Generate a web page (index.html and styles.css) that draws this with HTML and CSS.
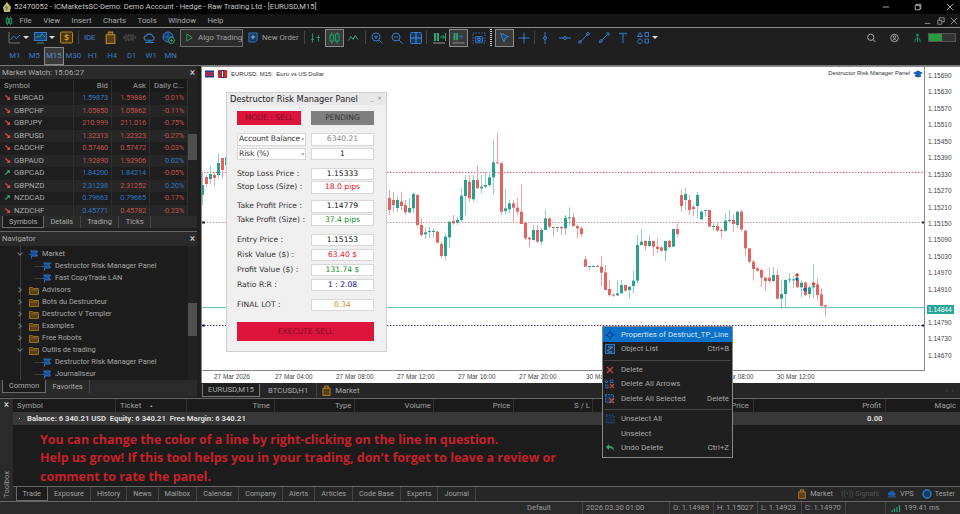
FILE: index.html
```html
<!DOCTYPE html>
<html lang="en">
<head>
<meta charset="utf-8">
<title>MetaTrader</title>
<link rel="stylesheet" href="styles.css">
</head>
<body>
<svg class="defs" aria-hidden="true">
  <symbol id="folder" viewBox="0 0 10 9"><path d="M.5 1.5h3l1 1h5v6H.5z" fill="#5a4012" stroke="#a87c25" stroke-width=".8"/><path d="M2 4h6" stroke="#a87c25" stroke-width=".6"/></symbol>
  <symbol id="robot" viewBox="0 0 10 9"><path d="M1.5 1h7L7 3.5l1.5 2.5h-6v2.500" fill="#1a4f9c" stroke="#3479c8" stroke-width=".9"/><path d="M0 4.500h2" stroke="#3479c8" stroke-width=".8"/></symbol>
  <symbol id="bag" viewBox="0 0 10 12"><path d="M1 3.500h8v8H1zM3 3.500V1h4v2.500" fill="#5a4012" stroke="#b5862c"/></symbol>
  <symbol id="cloud" viewBox="0 0 12 10"><path d="M3 7.500a2 2 0 0 1 0-4 3.200 3.200 0 0 1 6 .5 1.800 1.800 0 0 1 0 3.500zM6 7.500V10M2 9.500h8" fill="none" stroke="#3479c8"/></symbol>
</svg>
<div class="app">

  <header class="title">
    <svg class="t-logo" viewBox="0 0 10 11"><path d="M5 0l4 5-1 5H2L1 5z" fill="#c7b26a"/><path d="M3 4l3 1-1 4z" fill="#3f8f5f"/></svg>
    <span class="t-text">52470052 - ICMarketsSC-Demo: Demo Account - Hedge - Raw Trading Ltd - [EURUSD,M15]</span>
    <span class="win win-a">
      <svg viewBox="0 0 10 10"><path d="M1 5h8" stroke="#ccc"/></svg>
      <svg viewBox="0 0 10 10"><path d="M1.500 3h6v5.500h-6zM3 3V1.500h5.500V7H7.500" fill="none" stroke="#ccc"/></svg>
      <svg viewBox="0 0 10 10"><path d="M1 1l8 8M9 1l-8 8" stroke="#ccc"/></svg>
    </span>
  </header>

  <nav class="menu">
    <svg class="m-ic" viewBox="0 0 10 11"><path d="M3 0v11M7 0v11" stroke="#2f9d68"/><path d="M1.500 2.500h3v6h-3zM5.500 2.500h3v6h-3z" fill="#16412c" stroke="#2f9d68"/></svg>
    <span>File</span><span>View</span><span>Insert</span><span>Charts</span><span>Tools</span><span>Window</span><span>Help</span>
    <span class="win win-b">
      <svg viewBox="0 0 10 10"><path d="M1 8h7" stroke="#aaa"/></svg>
      <svg viewBox="0 0 10 10"><path d="M1 4h5v5H1zM3 4V1h6v5H6" fill="none" stroke="#aaa"/></svg>
      <svg viewBox="0 0 10 10"><path d="M1 1l8 8M9 1l-8 8" stroke="#aaa"/></svg>
    </span>
  </nav>

  <div class="tb1">
    <div class="tg tg-a">
      <svg class="ti" viewBox="0 0 13 13"><path d="M1 1v11h11" fill="none" stroke="#777"/><path d="M2.500 9l3-4 3 2.500L12 4" fill="none" stroke="#3479c8"/></svg><i class="drop"></i>
      <svg class="ti ti-next" viewBox="0 0 13 13"><rect x=".5" y="1.500" width="12" height="8" fill="#16457a" stroke="#3479c8"/><path d="M2 7l2-2 2 1 2-3 3 3M3 12h7" fill="none" stroke="#2f9d68"/></svg><i class="drop"></i>
      <svg class="ti ti-next" viewBox="0 0 13 13"><rect x=".5" y="1" width="12" height="11" rx="1" fill="#4a3510" stroke="#b5862c"/><text x="6.500" y="10" class="dollar">$</text></svg>
      <i class="sep"></i>
    </div>
    <div class="tg tg-b">
      <span class="ide">IDE</span>
      <svg class="ti" viewBox="0 0 10 12"><use href="#bag"/></svg>
      <svg class="ti" viewBox="0 0 13 13"><path d="M5 4h3v5H5zM3 3v7M10 3v7M1 5v3M12 5v3" fill="none" stroke="#555"/></svg>
      <svg class="ti" viewBox="0 0 12 10"><use href="#cloud"/></svg>
      <svg class="ti" viewBox="0 0 13 13"><circle cx="6" cy="6" r="5" fill="#123a66" stroke="#3479c8"/><path d="M1 6h10M6 1v10" stroke="#3479c8" stroke-width=".7"/><circle cx="9.500" cy="9.500" r="3" fill="#1f1f1f" stroke="#2fa36d"/><path d="M8 9.500h3M9.500 8v3" stroke="#2fa36d" stroke-width=".8"/></svg>
    </div>
    <div class="algo">
      <svg viewBox="0 0 10 10"><path d="M2 1l6 4-6 4z" fill="none" stroke="#2fa36d"/></svg>
      <span>Algo Trading</span>
    </div>
    <div class="neworder">
      <svg viewBox="0 0 11 12"><path d="M1 1h9v8l-2 2H1z" fill="#17375e" stroke="#3479c8"/><path d="M3 5.500h5M5.500 3v5" stroke="#9cc3ee"/></svg>
      <span>New Order</span>
      <i class="sep"></i>
    </div>
    <div class="tg tg-c">
      <svg class="tc" viewBox="0 0 13 13"><path d="M3 1v11M10 3v8M1 8h4M8 6h4" stroke="#2fa36d" fill="none"/></svg>
      <svg class="tc sel" viewBox="0 0 19 17"><path d="M6.500 2v13M12.500 2v13" stroke="#2fa36d"/><path d="M4.500 5h4v7h-4zM10.500 4h4v8h-4z" fill="#15553a" stroke="#2fa36d"/></svg>
      <svg class="tc narrow" viewBox="0 0 11 11"><path d="M.5 8l2.500-4 2 3 2-4 3 4" fill="none" stroke="#2fa36d"/></svg>
      <i class="sep"></i>
      <svg class="tz" viewBox="0 0 12 12"><circle cx="5" cy="5" r="4" fill="none" stroke="#3479c8"/><path d="M8 8l3.500 3.500M3 5h4M5 3v4" stroke="#3479c8"/></svg>
      <svg class="tz" viewBox="0 0 12 12"><circle cx="5" cy="5" r="4" fill="none" stroke="#3479c8"/><path d="M8 8l3.500 3.500M3 5h4" stroke="#3479c8"/></svg>
      <svg class="tz" viewBox="0 0 12 12"><rect x=".5" y=".5" width="11" height="11" rx="1" fill="#17375e" stroke="#3479c8"/><path d="M6 .5v11M.5 6h11" stroke="#4a8fd8"/></svg>
      <i class="sep"></i>
      <svg class="tz wide" viewBox="0 0 14 12"><path d="M3 1v8M6 1v8" stroke="#2fa36d" stroke-width="2.200"/><path d="M8 5h4M10.500 3l2 2-2 2M13.500 1v8" stroke="#2fa36d" fill="none"/><path d="M1 11h12" stroke="#999"/></svg>
      <svg class="tc sel" viewBox="0 0 19 17"><path d="M5 3v8M8 3v8" stroke="#2fa36d" stroke-width="2.200"/><path d="M15 7h-4M13 5l-2 2 2 2" stroke="#3479c8" fill="none"/><path d="M3 14h13" stroke="#999"/></svg>
      <svg class="tz shot" viewBox="0 0 14 13"><rect x=".5" y="1" width="13" height="11" fill="none" stroke="#3479c8" stroke-dasharray="1.500"/><rect x="3" y="5" width="8" height="6" rx="1" fill="#17375e" stroke="#3479c8"/><circle cx="7" cy="8" r="1.500" fill="none" stroke="#4a8fd8"/></svg>
      <i class="grip"></i>
      <svg class="tc sel" viewBox="0 0 19 17"><path d="M5 3l9 4-4 1.500L9 13z" fill="#17457a" stroke="#3f86d0"/></svg>
      <svg class="tz" viewBox="0 0 12 12"><path d="M6 .5v11M.5 6h11" stroke="#3479c8"/><circle cx="6" cy="6" r="1" fill="#3479c8"/></svg>
      <i class="sep sep-tight"></i>
      <svg class="tz" viewBox="0 0 12 12"><path d="M6 0v12" stroke="#3479c8"/><circle cx="6" cy="6" r="1.500" fill="#17375e" stroke="#3479c8"/></svg>
      <svg class="tz" viewBox="0 0 12 12"><path d="M0 6h12" stroke="#3479c8"/><circle cx="6" cy="6" r="1.500" fill="#17375e" stroke="#3479c8"/></svg>
      <svg class="tz" viewBox="0 0 12 12"><path d="M2 10l8-8" stroke="#3479c8"/><circle cx="2" cy="10" r="1.300" fill="none" stroke="#3479c8"/><circle cx="10" cy="2" r="1.300" fill="none" stroke="#3479c8"/></svg>
      <svg class="tz" viewBox="0 0 12 12"><path d="M1 11L11 1M8 1h3v3" stroke="#3479c8" fill="none"/><circle cx="3" cy="9" r="1.300" fill="#17375e" stroke="#3479c8"/></svg>
      <svg class="tz" viewBox="0 0 12 12"><path d="M2 1.500h8M6 1.500V11" stroke="#2c5f9e" stroke-width="1.500"/></svg>
      <svg class="tz" viewBox="0 0 12 12"><path d="M3 .5l2.500 4h-5zM8 .5h3.500v4H8z M3 7a2.300 2.300 0 1 0 .01 0zM8 7h3.500v4H8z" fill="none" stroke="#3479c8"/></svg><i class="drop"></i>
    </div>
    <div class="tg tg-r">
      <svg class="tr" viewBox="0 0 10 10"><circle cx="4.200" cy="4.200" r="3.500" fill="none" stroke="#bbb"/><path d="M7 7l2.500 2.500" stroke="#bbb"/></svg>
      <svg class="tr" viewBox="0 0 10 10"><circle cx="5" cy="5" r="4.200" fill="none" stroke="#aaa"/><circle cx="5" cy="4" r="1.500" fill="none" stroke="#aaa"/><path d="M2.500 8c1-2 4-2 5 0" fill="none" stroke="#aaa"/></svg>
      <svg class="tr" viewBox="0 0 10 12"><circle cx="5" cy="2.500" r="2" fill="#1d7d5a"/><path d="M5 5v6M1.500 11l1-4h5l1 4" fill="none" stroke="#1d9d6f"/></svg>
      <span class="meter"><i></i></span>
    </div>
  </div>

  <div class="tb2">
    <span>M1</span><span>M5</span><span class="on">M15</span><span>M30</span><span>H1</span><span>H4</span><span>D1</span><span>W1</span><span>MN</span>
  </div>

  <main class="main">
    <aside class="left">
      <section class="mw">
        <div class="ptitle"><span>Market Watch: 15:06:27</span><b>×</b></div>
        <div class="mw-body">
          <div class="mw-table">
            <div class="mrow mhead"><span>Symbol</span><span>Bid</span><span>Ask</span><span>Daily C...</span></div>
            <div class="mrow"><span class="sym dn">EURCAD</span><span class="b">1.59873</span><span class="r">1.59886</span><span class="r">-0.01%</span></div>
            <div class="mrow alt"><span class="sym dn">GBPCHF</span><span class="r">1.05850</span><span class="r">1.05862</span><span class="r">-0.11%</span></div>
            <div class="mrow"><span class="sym dn">GBPJPY</span><span class="r">210.999</span><span class="r">211.016</span><span class="r">-0.75%</span></div>
            <div class="mrow alt"><span class="sym dn">GBPUSD</span><span class="r">1.32313</span><span class="r">1.32323</span><span class="r">-0.27%</span></div>
            <div class="mrow"><span class="sym dn">CADCHF</span><span class="r">0.57460</span><span class="r">0.57472</span><span class="r">-0.03%</span></div>
            <div class="mrow alt"><span class="sym dn">GBPAUD</span><span class="r">1.92890</span><span class="r">1.92906</span><span class="b">0.02%</span></div>
            <div class="mrow"><span class="sym up">GBPCAD</span><span class="b">1.84200</span><span class="b">1.84214</span><span class="r">-0.05%</span></div>
            <div class="mrow alt"><span class="sym dn">GBPNZD</span><span class="b">2.31238</span><span class="r">2.31252</span><span class="b">0.20%</span></div>
            <div class="mrow"><span class="sym up">NZDCAD</span><span class="b">0.79663</span><span class="b">0.79665</span><span class="r">-0.17%</span></div>
            <div class="mrow alt"><span class="sym dn">NZDCHF</span><span class="b">0.45771</span><span class="r">0.45782</span><span class="r">-0.23%</span></div>
          </div>
          <div class="sbar"><em class="th th-a"></em></div>
        </div>
        <div class="ptabs"><span class="on">Symbols</span><span>Details</span><span>Trading</span><span>Ticks</span></div>
      </section>
      <section class="nav">
        <div class="ptitle"><span>Navigator</span><b>×</b></div>
        <div class="nav-body">
          <div class="tree">
            <div class="node open"><svg viewBox="0 0 10 9"><use href="#robot"/></svg>Market</div>
            <div class="node kid"><svg viewBox="0 0 10 9"><use href="#robot"/></svg>Destructor Risk Manager Panel</div>
            <div class="node kid"><svg viewBox="0 0 10 9"><use href="#robot"/></svg>Fast CopyTrade LAN</div>
            <div class="node"><svg viewBox="0 0 10 9"><use href="#folder"/></svg>Advisors</div>
            <div class="node"><svg viewBox="0 0 10 9"><use href="#folder"/></svg>Bots du Destructeur</div>
            <div class="node"><svg viewBox="0 0 10 9"><use href="#folder"/></svg>Destructor V Templer</div>
            <div class="node"><svg viewBox="0 0 10 9"><use href="#folder"/></svg>Examples</div>
            <div class="node"><svg viewBox="0 0 10 9"><use href="#folder"/></svg>Free Robots</div>
            <div class="node open"><svg viewBox="0 0 10 9"><use href="#folder"/></svg>Outils de trading</div>
            <div class="node kid"><svg viewBox="0 0 10 9"><use href="#robot"/></svg>Destructor Risk Manager Panel</div>
            <div class="node kid"><svg viewBox="0 0 10 9"><use href="#robot"/></svg>Journaliseur</div>
          </div>
          <div class="sbar"><em class="th th-b"></em></div>
        </div>
        <div class="ptabs ptabs-b"><span class="on">Common</span><span>Favorites</span></div>
      </section>
    </aside>

    <div class="chartcol">
      <div class="plot">
        <div class="canvas">
          <svg id="chart" class="chart" viewBox="201 66 724 305"></svg>
          <div class="c-head">
            <svg class="c-f" viewBox="0 0 9 7"><rect width="9" height="7" fill="#233a86"/><path d="M0 2.300h9M0 4.700h9" stroke="#d33" stroke-width="1.200"/></svg>
            <svg class="c-f" viewBox="0 0 9 8"><rect width="9" height="8" fill="#1c2f7c"/><path d="M0 0l3 0 0 8-3 0z" fill="#d22"/><path d="M6 0h3v8H6z" fill="#d22"/><path d="M4.500 1v6" stroke="#fff" stroke-width="1.200"/></svg>
            <span>EURUSD, M15:&nbsp; Euro vs US Dollar</span>
          </div>
          <div class="c-ea"><span>Destructor Risk Manager Panel</span>
            <svg viewBox="0 0 10 8"><path d="M0 3l5-2.500L10 3 5 5.500z" fill="#1560b0"/><path d="M2 4.500v2l3 1 3-1v-2" fill="#1560b0"/></svg>
          </div>
        </div>
        <div class="prices">
          <span>1.15690</span><span>1.15630</span><span>1.15570</span><span>1.15510</span><span>1.15450</span><span>1.15390</span><span>1.15330</span><span>1.15270</span><span>1.15210</span><span>1.15150</span><span>1.15090</span><span>1.15030</span><span>1.14970</span><span>1.14910</span><span class="tagged">1.14844</span><span>1.14790</span><span>1.14730</span><span>1.14670</span>
        </div>
        <div class="dates">
          <span>27 Mar 2026</span><span>27 Mar 04:00</span><span>27 Mar 08:00</span><span>27 Mar 12:00</span><span>27 Mar 16:00</span><span class="d67">27 Mar 20:00</span><span class="d130">30 Mar 00:00</span><span>30 Mar 08:00</span><span>30 Mar 12:00</span>
        </div>
      </div>
      <div class="ctabs">
        <span class="ct on">EURUSD,M15</span><span class="ct ct-b">BTCUSD,H1</span>
        <span class="ct ct-m"><svg viewBox="0 0 10 12"><use href="#bag"/></svg>Market</span>
        <span class="ct-arrows">‹ &nbsp;›</span>
      </div>
    </div>
  </main>

  <section class="toolbox">
    <div class="tstrip"><b>×</b><span>Toolbox</span></div>
    <div class="tmain">
      <div class="thead">
        <span class="c1">Symbol</span><span class="c2">Ticket <i>▲</i></span><span class="c3">Time</span><span class="c4">Type</span><span class="c4">Volume</span><span class="c4">Price</span><span class="c4">S / L</span><span class="c5"></span><span class="c6">Price</span><span class="c7">Profit</span><span class="c8">Magic</span>
      </div>
      <div class="balance"><span class="bal-t">Balance: 6 340.21 USD&nbsp; Equity: 6 340.21&nbsp; Free Margin: 6 340.21</span><span class="bal-p">0.00</span></div>
      <div class="notice">
        <p>You can change the color of a line by right-clicking on the line in question.</p>
        <p>Help us grow! If this tool helps you in your trading, don't forget to leave a review or</p>
        <p>comment to rate the panel.</p>
      </div>
      <div class="btabs">
        <span class="on">Trade</span><span>Exposure</span><span>History</span><span>News</span><span>Mailbox</span><span>Calendar</span><span>Company</span><span>Alerts</span><span>Articles</span><span>Code Base</span><span>Experts</span><span>Journal</span>
        <div class="btools">
          <svg viewBox="0 0 10 12"><use href="#bag"/></svg><span>Market</span>
          <em class="dim">((•)) Signals</em>
          <svg viewBox="0 0 12 10"><path d="M3 7a2 2 0 0 1 0-4 3.200 3.200 0 0 1 6 .5 1.800 1.800 0 0 1 0 3.500z" fill="#1d5fae"/><path d="M1 8.500h10" stroke="#3479c8"/></svg><span>VPS</span>
          <svg viewBox="0 0 10 10"><circle cx="5" cy="5" r="4" fill="#123a66" stroke="#3479c8" stroke-width="1.500"/></svg><span>Tester</span>
        </div>
      </div>
    </div>
  </section>

  <footer class="status">
    <span class="s-def">Default</span>
    <span class="s-date">2026.03.30 01:00</span>
    <span class="s-v">O: 1.14989</span><span class="s-v">H: 1.15027</span><span class="s-v">L: 1.14923</span><span class="s-v">C: 1.14970</span><span class="s-e"></span>
    <span class="s-net"><svg viewBox="0 0 10 9"><path d="M1 8v-2M3.500 8V4.500M6 8V3M8.500 8V1" stroke="#2fa36d" stroke-width="1.200"/></svg>199.41 ms</span>
  </footer>

  <div class="panel">
    <div class="p-title"><span>Destructor Risk Manager Panel</span><em>_ &nbsp;×</em></div>
    <div class="p-modes"><span class="btn sell">MODE : SELL</span><span class="btn pend">PENDING</span></div>
    <div class="p-sel">
      <div class="p-row"><span class="sel-box">Account Balance<i>▾</i></span><span class="fld grey">6340.21</span></div>
      <div class="p-row"><span class="sel-box">Risk (%)<i>▾</i></span><span class="fld">1</span></div>
    </div>
    <div class="p-sec p-s1">
      <div class="p-row"><label>Stop Loss Price :</label><span class="fld">1.15333</span></div>
      <div class="p-row"><label>Stop Loss (Size) :</label><span class="fld red">18.0 pips</span></div>
    </div>
    <div class="p-sec p-s2">
      <div class="p-row"><label>Take Profit Price :</label><span class="fld">1.14779</span></div>
      <div class="p-row"><label>Take Profit (Size) :</label><span class="fld green">37.4 pips</span></div>
    </div>
    <div class="p-sec p-s3">
      <div class="p-row"><label>Entry Price :</label><span class="fld">1.15153</span></div>
      <div class="p-row"><label>Risk Value ($) :</label><span class="fld red">63.40 $</span></div>
      <div class="p-row"><label>Profit Value ($) :</label><span class="fld green">131.74 $</span></div>
      <div class="p-row"><label>Ratio R:R :</label><span class="fld navy">1 : 2.08</span></div>
    </div>
    <div class="p-row p-lot"><label>FINAL LOT :</label><span class="fld gold">0.34</span></div>
    <div class="btn exec">EXECUTE SELL</div>
  </div>

  <div class="ctx">
    <div class="cx hi"><svg viewBox="0 0 10 10"><circle cx="5" cy="5" r="2.500" fill="none" stroke="#123a80"/><path d="M5 0v2M5 8v2M0 5h2M8 5h2" stroke="#123a80"/></svg><span>Properties of Destruct_TP_Line</span></div>
    <div class="cx"><svg viewBox="0 0 10 10"><rect x=".5" y=".5" width="9" height="9" fill="#17375e" stroke="#3479c8"/><path d="M2 7l6-4M3 3h4M3 8h4" stroke="#7ab0ea" stroke-width=".8"/></svg><span>Object List</span><kbd>Ctrl+B</kbd></div>
    <hr>
    <div class="cx"><svg viewBox="0 0 10 10"><path d="M2 2l6 6M8 2l-6 6" stroke="#c0453c" stroke-width="1.300"/></svg><span>Delete</span></div>
    <div class="cx"><svg viewBox="0 0 10 10"><path d="M1.500 1l1.500 2.500H0zM5 1h3v2.500H5zM0 6h3v3H0z" fill="none" stroke="#3479c8" stroke-width=".8"/><path d="M5 5l4 4M9 5L5 9" stroke="#c0453c" stroke-width="1.200"/></svg><span>Delete All Arrows</span></div>
    <div class="cx"><svg viewBox="0 0 10 10"><rect x=".5" y=".5" width="8" height="8" fill="#17375e" stroke="#3479c8" stroke-dasharray="1.500"/><path d="M4 4l5 5M9 4L4 9" stroke="#c0453c" stroke-width="1.200"/></svg><span>Delete All Selected</span><kbd>Delete</kbd></div>
    <hr>
    <div class="cx"><svg viewBox="0 0 10 10"><rect x="1" y="1" width="8" height="8" fill="#1b2a40" stroke="#2c4f7c" stroke-dasharray="1.500"/></svg><span>Unselect All</span></div>
    <div class="cx"><i class="noic"></i><span>Unselect</span></div>
    <div class="cx"><svg viewBox="0 0 10 10"><path d="M1 4l3-3v2c3 0 5 1 5 5-1-2-2-3-5-3v2z" fill="#2fa36d"/></svg><span>Undo Delete</span><kbd>Ctrl+Z</kbd></div>
  </div>
</div>
<script src="app.js"></script>
</body>
</html>
```

FILE: styles.css
```css
* { box-sizing: border-box; }
html, body { margin: 0; padding: 0; background: #1c1c1c; }
.defs { position: absolute; width: 0; height: 0; }
.app {
  position: relative; width: 960px; height: 514px; overflow: hidden;
  display: flex; flex-direction: column; background: #1f1f1f; color: #b5b5b5;
  font: 7.500px/1 Roboto, "Open Sans", sans-serif;
}
svg { display: block; flex: none; }
i, em { font-style: normal; }

/* title + menu */
.title { height: 14px; background: #000; display: flex; align-items: center; color: #c8c8c8; }
.t-logo { width: 10px; height: 11px; margin-left: 2px; }
.t-text { margin-left: 2px; font-size: 7.600px; white-space: nowrap; }
.win { display: flex; margin-left: auto; }
.win svg { width: 8px; height: 8px; }
.win-a { gap: 24px; margin-right: 6px; }
.win-b { gap: 5px; margin-right: 2px; }
.menu {
  height: 14px; background: #151515; border-bottom: 1px solid #8a8a8a;
  display: flex; align-items: center; font-size: 7.800px; color: #a8a8a8;
}
.m-ic { width: 8px; height: 10px; margin: 0 6.500px 0 5px; }
.menu > span:not(.win) { margin-right: 11.500px; }

/* toolbars */
.tb1 { height: 19px; display: flex; align-items: center; padding-left: 8px; }
.tg { display: flex; align-items: center; }
.ti { width: 13px; height: 13px; }
.drop { display: block; width: 0; height: 0; margin-left: 2px; border: 3px solid transparent; border-top: 3px solid #ddd; border-bottom: 0; }
.ti-next { margin-left: 5px; }
.sep { display: block; flex: none; width: 1px; height: 13px; background: #444; margin-left: 5px; }
.dollar { font: 700 9px "Open Sans", sans-serif; fill: #c9962f; text-anchor: middle; }
.tg-b { gap: 6.500px; margin-left: 5px; }
.ide { width: 13px; font-size: 8px; color: #3f7fd0; letter-spacing: -.2px; }
.algo {
  width: 63px; height: 18px; margin-left: 5px; flex: none; background: #2b2b2b; border: 1px solid #6e6e6e;
  display: flex; align-items: center; color: #a0a0a0; font-size: 7.900px; gap: 4px; padding-left: 4px; white-space: nowrap;
}
.algo svg { width: 9px; height: 9px; }
.neworder { width: 57px; flex: none; display: flex; align-items: center; margin-left: 5px; gap: 4px; font-size: 7.800px; color: #a0a0a0; white-space: nowrap; }
.neworder svg { width: 10px; height: 11px; }
.neworder .sep { margin-left: auto; }
.tg-c { margin-left: 5px; flex: none; }
.tc { width: 11px; height: 12px; }
.tc.sel { width: 19px; height: 18px; background: #3a3a3a; border: 1px solid #8a8a8a; }
.tc.narrow { margin-left: 4px; }
.tg-c > .tc:first-child { margin-right: 4px; }
.tg-c .sep { margin: 0 5px 0 6px; }
.tz { width: 12px; height: 12px; margin-right: 7.500px; }
.tg-c .tz + .sep { margin-left: -3.500px; }
.tg-c .sep-tight { margin-right: 4px; }
.tz.wide { width: 14px; margin-right: 3px; }
.tz.shot { width: 14px; margin: 0 4px 0 5px; }
.tc.sel + .tz { margin-left: 4px; }
.grip { display: block; width: 2px; height: 18px; margin-right: 3px; background: repeating-linear-gradient(#ccc 0 1px, transparent 1px 2px); }
.tg-c .drop { margin-left: -4px; }
.tg-r { margin-left: auto; gap: 14px; margin-right: 4px; }
.tr { width: 9px; height: 10px; }
.meter { display: block; width: 28px; height: 9px; background: #333; border: 1px solid #555; margin-left: -8px; }
.meter i { display: block; width: 13px; height: 100%; background: #2a9a3f; }
.tb2 { height: 18px; display: flex; align-items: stretch; padding-left: 5px; }
.tb2 span {
  width: 19.500px; display: flex; align-items: center; justify-content: center;
  font-size: 7.800px; color: #3f78c4;
}
.tb2 .on { background: #3a3a3a; border: 1px solid #8a8a8a; color: #5c8cc9; }

/* main */
.main { height: 333px; display: flex; border-top: 1px solid #777; }
.left { width: 197px; margin-right: 4px; display: flex; flex-direction: column; flex: none; }
.ptitle {
  height: 13px; display: flex; align-items: center; justify-content: space-between;
  background: #2a2a2a; padding: 0 2px; font-size: 7.800px; color: #aaa; flex: none;
}
.ptitle b { font-size: 10px; color: #ddd; font-weight: 400; }
.mw { height: 166px; display: flex; flex-direction: column; border-bottom: 1px solid #666; }
.mw-body { height: 137px; display: flex; background: #1c1c1c; flex: none; }
.mw-table { flex: 1; overflow: hidden; }
.mrow {
  height: 12.500px; display: grid; grid-template-columns: 74px 38px 38px 38px;
  align-items: center; font-size: 7.400px; background: #1e1e1e;
}
.mrow.alt { background: #262626; }
.mrow > span { text-align: right; padding-right: 3px; letter-spacing: -.15px; border-right: 1px solid #2f2f2f; line-height: 12px; }
.mrow .sym { text-align: left; padding-left: 14px; position: relative; font-size: 7.800px; color: #aaa; letter-spacing: 0; }
.sym::before { position: absolute; left: 4px; top: 0; font-size: 8px; font-weight: 700; }
.sym.dn::before { content: "↘"; color: #e0524c; }
.sym.up::before { content: "↗"; color: #2fb27d; }
.r { color: #c0514c; }
.b { color: #2f74c0; }
.mhead { height: 13px; background: #191919; font-size: 7.800px; color: #a0a0a0; }
.mhead > span:first-child { text-align: left; padding-left: 4px; }
.mhead > span { letter-spacing: 0; }
.sbar { width: 9px; background: #222; position: relative; flex: none; }
.th { display: block; position: absolute; left: 0; width: 9px; background: #4f4f4f; }
.th-a { top: 55px; height: 26px; }
.th-b { top: 57px; height: 33px; }
.ptabs {
  height: 12px; display: flex; align-items: stretch; background: #2a2a2a; padding-left: 2px;
  font-size: 7.400px; color: #aaa; flex: none;
}
.ptabs span { padding: 0 6.500px; display: flex; align-items: center; border-right: 1px solid #444; }
.ptabs .on { background: #1c1c1c; border: 1px solid #6a6a6a; border-top: 0; padding: 0 6px; width: 42px; }
.ptabs-b .on { width: 44px; }
.nav { flex: 1; display: flex; flex-direction: column; min-height: 0; }
.nav .ptitle { height: 14px; }
.nav-body { height: 134px; display: flex; background: #1c1c1c; flex: none; }
.tree { flex: 1; padding-top: 2px; overflow: hidden; background: linear-gradient(#3c3c3c, #3c3c3c) 20px 0 / 1px 100% no-repeat; }
.node {
  height: 12px; display: flex; align-items: center; padding-left: 29px; font-size: 7.400px; color: #a8a8a8; position: relative; white-space: nowrap; gap: 3px;
}
.node svg { width: 10px; height: 9px; }
.node::before {
  content: ""; position: absolute; left: 17px; top: 4px; width: 3px; height: 3px;
  border-right: 1px solid #777; border-top: 1px solid #777; transform: rotate(45deg);
}
.node.open::before { transform: rotate(135deg); left: 18px; top: 3px; }
.node.kid { padding-left: 42px; }
.node.kid::before { left: 34px; top: 6px; width: 8px; height: 0; border: 0; border-top: 1px solid #3c3c3c; transform: none; }
.ptabs-b { height: 17px; padding-bottom: 4px; }

/* chart */
.chartcol { flex: 1; display: flex; flex-direction: column; min-width: 0; }
.plot {
  height: 317px; background: #fff; border-top: 1px solid #888; border-left: 1px solid #888;
  display: grid; grid-template-columns: 723px 1fr; grid-template-rows: 304px 1fr; color: #444; font-family: "Liberation Sans", sans-serif;
}
.canvas { position: relative; border-right: 1px solid #888; border-bottom: 1px solid #888; overflow: hidden; }
.chart { width: 724px; height: 305px; margin-left: -1px; margin-top: -1px; }
.c-head { position: absolute; left: 3px; top: 3px; display: flex; align-items: center; gap: 4px; font-size: 6px; color: #333; }
.c-f { width: 9px; height: 8px; }
.c-ea { position: absolute; right: 1px; top: 3px; display: flex; align-items: center; gap: 3px; font-size: 5.900px; color: #333; }
.c-ea svg { width: 10px; height: 8px; }
.prices { padding: 4px 0 0 3px; font-size: 6.500px; display: flex; flex-direction: column; }
.prices span { height: 16.450px; line-height: 9px; }
.prices .tagged { background: #26a69a; color: #fff; height: 9px; width: 27px; margin: 3.500px 0 4px -1px; padding-left: 1px; }
.dates { grid-column: 1 / 3; display: flex; padding: 3px 0 0 12px; font-size: 6.400px; white-space: nowrap; }
.dates span { width: 61px; }
.dates .d67 { width: 67px; }
.dates .d130 { width: 130px; }
.ctabs { height: 15px; display: flex; align-items: center; padding-left: 1px; background: #262626; font-size: 7.800px; color: #aaa; }
.ct { height: 100%; padding: 0 5px; display: flex; align-items: center; border-right: 1px solid #444; gap: 4px; white-space: nowrap; }
.ct.on { border: 1px solid #777; border-top: 0; background: #1e1e1e; height: 13px; margin-top: -1px; width: 58px; justify-content: center; }
.ct-b { padding: 0 8px; }
.ct-m { border: 0; }
.ct-m svg { width: 9px; height: 11px; }
.ct-arrows { margin-left: auto; margin-right: 6px; color: #555; }

/* toolbox */
.toolbox { height: 103px; display: flex; border-top: 1px solid #666; }
.tstrip { width: 13px; background: #2a2a2a; display: flex; flex-direction: column; align-items: center; justify-content: space-between; padding: 1px 0 3px; }
.tstrip b { font-weight: 400; font-size: 10px; color: #ddd; }
.tstrip span { writing-mode: vertical-rl; transform: rotate(180deg); font-size: 7.500px; color: #999; }
.tmain { flex: 1; display: flex; flex-direction: column; min-width: 0; }
.thead { height: 14px; display: flex; align-items: center; background: #1a1a1a; font-size: 7.800px; color: #a0a0a0; }
.thead span { height: 100%; display: flex; align-items: center; justify-content: flex-end; padding-right: 4px; border-right: 1px solid #333; flex: none; }
.thead .c1 { width: 103px; justify-content: flex-start; padding-left: 4px; }
.thead .c2 { width: 71px; justify-content: flex-start; padding-left: 4px; gap: 8px; }
.thead .c2 i { font-size: 4px; }
.thead .c3 { width: 88px; }
.thead .c4 { width: 79.500px; padding-right: 2px; }
.thead .c5 { width: 79px; }
.thead .c6 { width: 82px; }
.thead .c7 { width: 132px; }
.thead .c8 { flex: 1; border: 0; }
.balance { height: 13px; background: #383838; display: flex; align-items: center; font-weight: 700; font-size: 7.700px; color: #ddd; position: relative; }
.balance::before { content: ""; position: absolute; left: 6px; top: 6px; width: 1px; height: 1px; background: #bbb; }
.bal-t { margin-left: 14px; }
.bal-p { position: absolute; left: 854px; }
.notice { height: 61px; background: #1c1c1c; padding: 5.500px 0 0 27px; color: #c8202a; font: 700 12.480px "Open Sans", sans-serif; white-space: nowrap; }
.notice p { margin: 0; height: 18.500px; line-height: 18.500px; }
.btabs { height: 15px; display: flex; align-items: center; background: #262626; border-top: 1px solid #666; font-size: 7.300px; color: #a0a0a0; padding-left: 2.500px; }
.btabs > span { height: 100%; padding: 0 6px; display: flex; align-items: center; border-right: 1px solid #444; white-space: nowrap; }
.btabs .on { background: #1c1c1c; border: 1px solid #6a6a6a; border-top: 0; height: 14px; }
.btools { margin-left: auto; display: flex; align-items: center; gap: 3px; padding-right: 5px; }
.btools svg { width: 10px; height: 10px; margin-left: 5px; }
.btools .dim { color: #555; margin-left: 5px; }

/* status */
.status { height: 13px; display: flex; align-items: center; background: #2a2a2a; border-top: 1px solid #666; font-size: 7.500px; color: #9c9c9c; }
.status span { height: 100%; display: flex; align-items: center; border-right: 1px solid #444; padding-left: 3px; white-space: nowrap; }
.s-def { margin-left: 524px; width: 59px; }
.s-date { width: 87px; }
.s-v { width: 44px; }
.s-e { width: 40px; }
.s-net { gap: 3px; border: 0 !important; padding-left: 5px !important; }
.s-net svg { width: 10px; height: 9px; }

/* floating panel */
.panel {
  position: absolute; left: 226px; top: 92px; width: 161px; height: 260px;
  background: #f0f0f0; border: 1px solid #d0d0d0; padding: 0 12px 0 10px; color: #333;
  font: 7.600px/1 "DejaVu Sans", sans-serif;
}
.p-title { height: 12px; margin: 0 -11px 0 -7px; padding: 2px 3px 0 0; display: flex; justify-content: space-between; font-size: 8.300px; color: #222; background: #e8e8e8; white-space: nowrap; }
.p-title em { color: #888; font-size: 6px; }
.p-modes { display: flex; justify-content: space-between; margin-top: 6px; }
.btn { display: flex; align-items: center; justify-content: center; }
.sell, .pend { width: 64px; height: 14px; }
.sell { background: #dc143c; color: #7c1025; }
.pend { width: 63px; background: #7f7f7f; color: #333; }
.p-sel { margin-top: 8px; display: flex; flex-direction: column; gap: 2px; }
.p-row { display: flex; justify-content: space-between; align-items: center; }
.fld {
  width: 63px; height: 12.500px; background: #fff; border: 1px solid #d8d8d8;
  display: flex; align-items: center; justify-content: center; color: #111; white-space: nowrap;
}
.sel-box { width: 69px; height: 12.500px; background: #fff; border: 1px solid #d8d8d8; display: flex; align-items: center; justify-content: space-between; padding-left: 1px; color: #333; white-space: nowrap; overflow: hidden; letter-spacing: -.15px; }
.sel-box i { color: #aaa; font-size: 6px; padding-right: 1px; }
.grey { color: #888; }
.red { color: #e01420; }
.green { color: #188a20; }
.navy { color: #14148a; }
.gold { color: #e08a1a; }
.p-sec { display: flex; flex-direction: column; }
.p-s1 { margin-top: 7.500px; gap: 1px; }
.p-s2 { margin-top: 6.500px; gap: 1px; }
.p-s3 { margin-top: 7.500px; gap: 2.500px; }
.p-lot { margin-top: 7.500px; }
.exec { margin-top: 11px; height: 19px; width: 137px; background: #dc143c; color: #7c1025; }

/* context menu */
.ctx {
  position: absolute; left: 602px; top: 326px; width: 131px; height: 132px;
  background: #1f1f1f; border: 1px solid #888; color: #a8a8a8; font-size: 7.800px;
}
.cx { height: 14.500px; display: flex; align-items: center; padding: 0 3px 0 2px; white-space: nowrap; }
.cx svg, .noic { width: 10px; height: 10px; margin-right: 6px; display: block; flex: none; }
.cx kbd { margin-left: auto; font: inherit; }
.cx.hi { background: #0a70c8; color: #d8e6f5; height: 15px; }
.ctx hr { margin: 3px 1px 2px; border: 0; border-top: 1px solid #444; }
```

FILE: app.js
```js
// Candle data read off the chart: [x, wickTop, bodyTop, bodyBottom, wickBottom, colour]
// Series are stored at 3x scale relative to their origin.
const A = `4 215 245 258 270 r,16 240 255 277 285 r,28 235 264 277 280 g,40 217 222 265 280 g,52 222 225 315 322 r,64 295 315 345 350 r,76 322 337 343 357 g,88 320 333 335 355 g,100 325 333 335 355 g,112 332 335 368 370 r,124 365 372 408 415 r,136 340 350 408 420 g,148 305 305 352 382 g,160 285 303 310 315 r,172 290 300 308 315 g,184 205 227 300 305 g,196 165 180 228 285 g,208 165 185 235 245 r,220 165 180 238 245 g,232 138 180 205 205 r,244 165 200 205 220 g,256 158 195 200 205 g,268 155 172 195 200 g,280 60 127 172 222 g,292 38 127 130 130 r,304 125 130 275 285 r,316 207 265 273 283 g,328 240 250 268 280 g,340 240 250 263 310 r,352 235 263 275 285 r,364 193 275 312 312 r,376 308 308 355 360 r,388 350 353 358 382 r,400 315 330 360 362 g,412 315 330 365 370 r,424 325 330 365 375 g,436 270 295 330 330 g,448 292 295 320 325 r,460 320 321 323 350 r,472 320 321 323 335 g,484 318 321 325 345 r,496 285 293 325 345 g,508 262 292 293 315 g,520 280 292 318 320 r,532 315 318 325 355 r,544 320 325 342 350 r,556 408 418 440 440 r,568 437 438 440 450 g,580 435 438 440 441 g,592 435 437 440 442 r,604 408 440 458 498 r,616 435 457 510 510 r,628 480 507 525 530 r,640 520 524 526 530 r,652 482 520 526 528 g,664 480 495 520 520 g,676 495 495 512 515 r,688 498 500 510 535 g,700 452 482 498 520 g,712 345 375 482 490 g,724 328 365 375 375 g,736 360 363 378 392 r,748 345 363 378 380 g,760 362 363 380 408 r,772 355 380 387 400 r,784 380 382 392 395 r,796 365 363 392 424 g,808 360 363 381 385 r,820 325 327 380 380 g,832 310 327 342 352 r`;
const B = `4 30 35 58 60 g,16 30 30 32 50 g,28 30 30 80 80 r,40 68 78 80 92 g,52 70 78 92 95 r,64 85 90 92 115 r,76 42 62 92 95 g,88 30 60 62 68 g,100 42 60 72 95 r,112 35 35 75 85 g,124 28 35 88 95 r,136 88 92 145 170 r,148 145 145 185 190 r,160 180 185 207 242 r,172 200 205 212 215 r,184 205 210 233 260 r,196 230 233 243 272 r,208 203 233 243 250 r,220 200 225 243 245 g,232 208 225 296 298 r,244 238 282 296 328 g,256 238 240 282 320 g,268 220 238 240 250 g,280 228 238 240 265 g,292 220 240 262 262 r,304 240 248 262 292 g,316 245 248 285 288 r,328 258 262 282 295 g,340 192 258 262 295 g,352 235 253 285 302 r,364 265 283 318 320 r,376 314 316 320 350 r`;
const EXTRA = [
  [202,173,185,195,205,'g'],[206,175,177,184,187,'r'],[210,166,174,179,184,'g'],[214,172,175,178,186,'r'],
  [218,153,163,175,179,'g'],[222,158,158,170,178,'r'],[226,156,157,165,168,'g'],
  [389,190,198,210,215,'r'],[393,192,200,205,212,'r'],[397,196,200,208,212,'g'],
  [681,190,195,206,212,'r'],[685,188,194,200,210,'g'],[689,195,200,210,215,'r'],[693,205,207,209,216,'r'],[697,192,195,206,218,'g']
];
const NS = 'http://www.w3.org/2000/svg';
const svg = document.getElementById('chart');
const COLORS = { r: ['#f0a3a0', '#e5625e'], g: ['#8fd0c8', '#2aa090'] };

function add(tag, attrs) {
  const el = document.createElementNS(NS, tag);
  for (const k in attrs) el.setAttribute(k, attrs[k]);
  svg.appendChild(el);
}
function hline(y, stroke, dash) {
  const a = { x1: 201, x2: 925, y1: y, y2: y, stroke, 'stroke-width': 1 };
  if (dash) a['stroke-dasharray'] = dash;
  add('line', a);
}
function candle(x, wt, bt, bb, wb, c) {
  const [w, b] = COLORS[c];
  add('rect', { x, y: wt, width: 1, height: Math.max(wb - wt, 1), fill: w });
  add('rect', { x: x - 1, y: bt, width: 3, height: Math.max(bb - bt, 1), fill: b });
}
function series(data, ox, oy) {
  data.split(',').forEach(s => {
    const p = s.split(' ');
    const n = p.slice(0, 5).map(Number);
    candle(Math.round(ox + n[0] / 3), oy + n[1] / 3, oy + n[2] / 3, oy + n[3] / 3, oy + n[4] / 3, p[5]);
  });
}

hline(172.5, '#e06060', '1.5 1.5');
hline(222.5, '#c09090', '1.5 1.5');
hline(307.5, '#6cc4ba');
hline(325.5, '#4a3a90', '1.5 1.5');
EXTRA.forEach(c => candle.apply(null, c));
series(A, 400, 120);
series(B, 700, 200);
[[203, 325.5, '#1a1a80'], [923, 325.5, '#1a1a80'], [923, 222.5, '#222'], [203, 222.5, '#222']].forEach(m =>
  add('rect', { x: m[0] - 1, y: m[1] - 1, width: 3, height: 2, fill: m[2] }));
[[797, 275, '#d8452f'], [797, 279, '#1560b0'], [805, 289.5, '#1560b0'], [813.5, 284, '#d8452f']].forEach(m =>
  add('circle', { cx: m[0], cy: m[1], r: 1.8, fill: m[2] }));
```
